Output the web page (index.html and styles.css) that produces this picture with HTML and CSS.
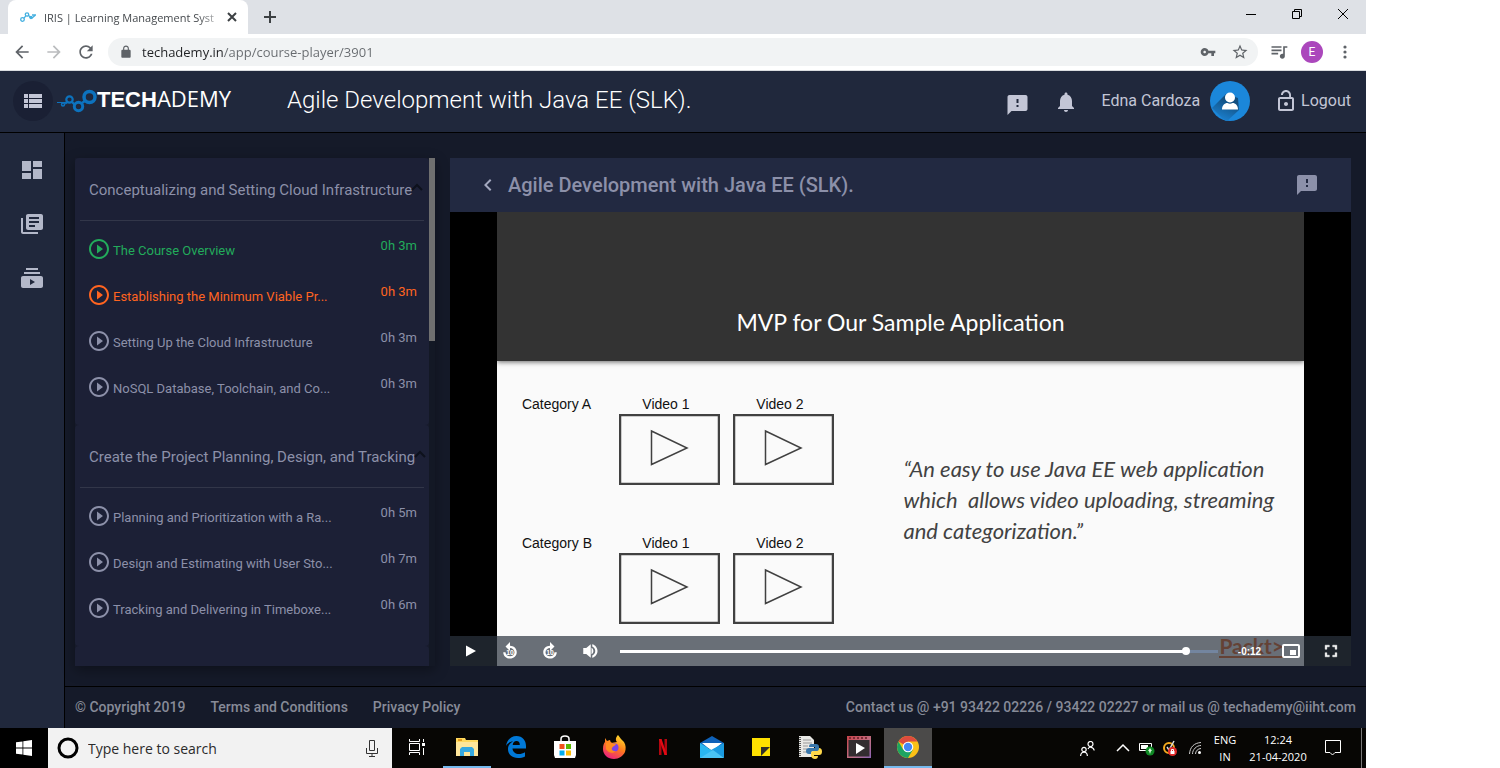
FILE: index.html
```html
<!DOCTYPE html>
<html lang="en">
<head>
<meta charset="utf-8">
<title>IRIS | Learning Management System</title>
<link rel="stylesheet" href="styles.css">
</head>
<body>
<div class="desktop">

  <div class="tabstrip">
    <div class="tab">
      <svg class="tab-icon" viewBox="0 0 16 16" fill="none" stroke="#45b0e0" stroke-width="1.300"><circle cx="2.500" cy="10.500" r="1.800"/><circle cx="7" cy="5.500" r="1.700"/><path d="M3.800 9.300L6 6.600M8.500 6l1.500 2.500 2 .5 3-2.500M12 6h4"/><circle cx="11" cy="8.500" r="1"/></svg>
      <span class="tab-title">IRIS | Learning Management Syst</span>
      <button class="bare" aria-label="Close tab"><svg width="10" height="10" viewBox="0 0 10 10" stroke="#3c4043" stroke-width="2"><path d="M1 1l8 8M9 1l-8 8"/></svg></button>
    </div>
    <button class="bare new-tab" aria-label="New tab"><svg width="12" height="12" viewBox="0 0 12 12" stroke="#3c4043" stroke-width="2"><path d="M6 0v12M0 6h12"/></svg></button>
    <div class="window-buttons">
      <button class="bare" aria-label="Minimize"><svg width="10" height="10" viewBox="0 0 10 10" stroke="#000"><path d="M0 5.500h10"/></svg></button>
      <button class="bare" aria-label="Restore"><svg width="10" height="10" viewBox="0 0 10 10" fill="none" stroke="#000"><path d="M.5 2.500h7v7h-7zM2.500 2.500v-2h7v7h-2"/></svg></button>
      <button class="bare" aria-label="Close"><svg width="10" height="10" viewBox="0 0 10 10" stroke="#000"><path d="M0 0l10 10M10 0L0 10"/></svg></button>
    </div>
  </div>

  <div class="toolbar">
    <button class="bare nav-button" aria-label="Back"><svg width="20" height="20" viewBox="0 0 24 24" fill="#5f6368"><path d="M20 11H7.830l5.590-5.590L12 4l-8 8 8 8 1.410-1.410L7.830 13H20v-2z"/></svg></button>
    <button class="bare nav-button" aria-label="Forward"><svg width="20" height="20" viewBox="0 0 24 24" fill="#babcbe"><path d="M4 11h12.170l-5.590-5.590L12 4l8 8-8 8-1.410-1.410L16.170 13H4v-2z"/></svg></button>
    <button class="bare nav-button" aria-label="Reload"><svg width="20" height="20" viewBox="0 0 24 24" fill="#5f6368"><path d="M17.650 6.350C16.200 4.900 14.210 4 12 4c-4.420 0-7.990 3.580-7.990 8s3.570 8 7.990 8c3.730 0 6.840-2.550 7.730-6h-2.080c-.82 2.330-3.040 4-5.650 4-3.310 0-6-2.690-6-6s2.690-6 6-6c1.660 0 3.140.69 4.220 1.780L13 11h7V4l-2.350 2.350z"/></svg></button>
    <div class="omnibox">
      <svg width="14" height="14" viewBox="0 0 24 24" fill="#5f6368"><path d="M18 8h-1V6c0-2.760-2.240-5-5-5S7 3.240 7 6v2H6c-1.100 0-2 .9-2 2v10c0 1.100.9 2 2 2h12c1.100 0 2-.9 2-2V10c0-1.100-.9-2-2-2zM9 8V6c0-1.660 1.340-3 3-3s3 1.340 3 3v2H9z"/></svg>
      <input class="address" type="text" aria-label="Address" value="techademy.in/app/course-player/3901">
      <button class="bare omni-button" aria-label="Saved passwords"><svg width="16" height="16" viewBox="0 0 24 24" fill="#5f6368"><path d="M12.650 10C11.830 7.670 9.610 6 7 6c-3.310 0-6 2.690-6 6s2.690 6 6 6c2.610 0 4.830-1.670 5.650-4H17v4h4v-4h2v-4H12.650zM7 14c-1.100 0-2-.9-2-2s.9-2 2-2 2 .9 2 2-.9 2-2 2z"/></svg></button>
      <button class="bare omni-button" aria-label="Bookmark"><svg width="18" height="18" viewBox="0 0 24 24" fill="#5f6368"><path d="M22 9.240l-7.190-.62L12 2 9.190 8.630 2 9.240l5.460 4.730L5.820 21 12 17.270 18.180 21l-1.630-7.030L22 9.240zM12 15.400l-3.760 2.270 1-4.280-3.320-2.880 4.380-.38L12 6.100l1.710 4.040 4.380.38-3.320 2.880 1 4.280L12 15.400z"/></svg></button>
    </div>
    <button class="bare tool-button" aria-label="Media controls"><svg width="20" height="20" viewBox="0 0 24 24" fill="#5f6368"><path d="M15 5H3v2h12V5zm0 4H3v2h12V9zM3 15h8v-2H3v2zM17 5v9.180c-.31-.11-.65-.18-1-.18-1.660 0-3 1.340-3 3s1.340 3 3 3 3-1.340 3-3V7h3V5h-5z"/></svg></button>
    <button class="bare profile" aria-label="Profile">E</button>
    <button class="bare tool-button" aria-label="Menu"><svg width="4" height="14" viewBox="0 0 4 14" fill="#5f6368"><circle cx="2" cy="2" r="1.600"/><circle cx="2" cy="7" r="1.600"/><circle cx="2" cy="12" r="1.600"/></svg></button>
  </div>

  <div class="app">
    <header class="app-header">
      <button class="bare menu-toggle" aria-label="Toggle menu"><svg width="24" height="24" viewBox="0 0 24 24" fill="#c3c6d6"><path d="M3 14h4v-4H3v4zm0 5h4v-4H3v4zM3 9h4V5H3v4zm5 5h13v-4H8v4zm0 5h13v-4H8v4zM8 5v4h13V5H8z"/></svg></button>
      <a class="logo" href="#">
        <svg width="38" height="24" viewBox="0 0 38 24" fill="none" stroke="#0d72bd"><path d="M-2 13.500h8" stroke-width="1"/><circle cx="4" cy="15.500" r="1.500" stroke-width="1.500"/><path d="M6 14.500l3-2M13 13l3 3M23 14l4-3" stroke-width="2.200"/><circle cx="10.500" cy="10.500" r="3.200" stroke-width="2.200"/><circle cx="19.500" cy="17.500" r="4.200" stroke-width="3"/><circle cx="30.500" cy="8" r="5.500" stroke-width="3.500"/></svg>
        <span><b>TECH</b>ADEMY</span>
      </a>
      <h1 class="course-name">Agile Development with Java EE (SLK).</h1>
      <div class="header-actions">
        <button class="bare feedback-button" aria-label="Feedback"><svg width="25" height="24" viewBox="0 0 24 24" fill="#c3c6d6"><path d="M20 2H4c-1.100 0-1.990.9-1.990 2L2 22l4-4h14c1.100 0 2-.9 2-2V4c0-1.100-.9-2-2-2zm-7 12h-2v-2h2v2zm0-4h-2V6h2v4z"/></svg></button>
        <button class="bare bell-button" aria-label="Notifications"><svg width="24" height="24" viewBox="0 0 24 24" fill="#c3c6d6"><path d="M12 22c1.100 0 2-.9 2-2h-4c0 1.100.89 2 2 2zm6-6v-5c0-3.070-1.640-5.640-4.500-6.320V4c0-.83-.67-1.500-1.500-1.500s-1.500.67-1.500 1.500v.68C7.630 5.360 6 7.920 6 11v5l-2 2v1h16v-1l-2-2z"/></svg></button>
        <span class="user-name">Edna Cardoza</span>
        <svg class="avatar" width="40" height="40" viewBox="0 0 40 40"><defs><clipPath id="disc"><circle cx="20" cy="20" r="20"/></clipPath><linearGradient id="shade" x1=".6" y1=".2" x2=".3" y2=".9"><stop offset="0" stop-color="#124f80"/><stop offset="1" stop-color="#1b80cf"/></linearGradient></defs><circle cx="20" cy="20" r="20" fill="#1b87da"/><g clip-path="url(#disc)"><path d="M16 13L2 27l14 14 13-12-1-12z" fill="url(#shade)"/></g><circle cx="20" cy="16.500" r="5" fill="#fff"/><path d="M12 28.500c0-4 2.500-6.500 5.500-6.500 1.500 1 3.500 1 5 0 3 0 5.500 2.500 5.500 6.500z" fill="#fff"/></svg>
        <a class="logout" href="#"><svg width="24" height="24" viewBox="0 0 24 24" fill="#c3c6d6"><path d="M12 17c1.100 0 2-.9 2-2s-.9-2-2-2-2 .9-2 2 .9 2 2 2zm6-9h-1V6c0-2.760-2.240-5-5-5S7 3.240 7 6h1.900c0-1.710 1.390-3.100 3.100-3.100 1.710 0 3.100 1.390 3.100 3.100v2H6c-1.100 0-2 .9-2 2v10c0 1.100.9 2 2 2h12c1.100 0 2-.9 2-2V10c0-1.100-.9-2-2-2zm0 12H6V10h12v10z"/></svg>Logout</a>
      </div>
    </header>

    <div class="app-body">
      <nav class="side-nav" aria-label="Main">
        <a href="#" aria-label="Dashboard"><svg width="24" height="24" viewBox="0 0 24 24"><path d="M2 13h9V3H2v10zm0 8h9v-6H2v6zm11 0h9V11h-9v10zm0-18v6h9V3h-9z"/></svg></a>
        <a href="#" aria-label="Courses"><svg width="24" height="24" viewBox="0 0 24 24"><path d="M3 6H1v14c0 1.100.9 2 2 2h15v-2H3V6zm18-4H8c-1.100 0-2 .9-2 2v12c0 1.100.9 2 2 2h13c1.100 0 2-.9 2-2V4c0-1.100-.9-2-2-2zm-2 9H9V9h10v2zm-4 4H9v-2h6v2zm4-8H9V5h10v2z"/></svg></a>
        <a href="#" aria-label="Videos"><svg width="24" height="24" viewBox="0 0 24 24"><path d="M20 8H4V6h16v2zm-2-6H6v2h12V2zm5 10v8c0 1.100-.9 2-2 2H3c-1.100 0-2-.9-2-2v-8c0-1.100.9-2 2-2h18c1.100 0 2 .9 2 2zm-8 4l-5-3v6l5-3z"/></svg></a>
      </nav>

      <div class="main">
        <div class="content">
          <aside class="course-list">
            <div class="modules">
              <section class="module">
                <h2 class="module-title">Conceptualizing and Setting Cloud Infrastructure<svg class="caret" width="12" height="8" viewBox="0 0 12 8" fill="none" stroke="#0d111c" stroke-width="2"><path d="M1 7l5-5 5 5"/></svg></h2>
                <ul class="lessons">
                  <li class="done"><svg class="play" viewBox="0 0 24 24"><use href="#play-circle"/></svg><a href="#">The Course Overview</a><span>0h 3m</span></li>
                  <li class="current"><svg class="play" viewBox="0 0 24 24"><use href="#play-circle"/></svg><a href="#">Establishing the Minimum Viable Pr...</a><span>0h 3m</span></li>
                  <li><svg class="play" viewBox="0 0 24 24"><use href="#play-circle"/></svg><a href="#">Setting Up the Cloud Infrastructure</a><span>0h 3m</span></li>
                  <li><svg class="play" viewBox="0 0 24 24"><use href="#play-circle"/></svg><a href="#">NoSQL Database, Toolchain, and Co...</a><span>0h 3m</span></li>
                </ul>
              </section>
              <section class="module">
                <h2 class="module-title">Create the Project Planning, Design, and Tracking<svg class="caret" width="12" height="8" viewBox="0 0 12 8" fill="none" stroke="#0d111c" stroke-width="2"><path d="M1 7l5-5 5 5"/></svg></h2>
                <ul class="lessons">
                  <li><svg class="play" viewBox="0 0 24 24"><use href="#play-circle"/></svg><a href="#">Planning and Prioritization with a Ra...</a><span>0h 5m</span></li>
                  <li><svg class="play" viewBox="0 0 24 24"><use href="#play-circle"/></svg><a href="#">Design and Estimating with User Sto...</a><span>0h 7m</span></li>
                  <li><svg class="play" viewBox="0 0 24 24"><use href="#play-circle"/></svg><a href="#">Tracking and Delivering in Timeboxe...</a><span>0h 6m</span></li>
                </ul>
              </section>
              <section class="module module-rest"></section>
            </div>
            <div class="scrollbar"><div class="scroll-thumb"></div></div>
          </aside>

          <section class="player">
            <div class="player-header">
              <button class="bare" aria-label="Back to course"><svg width="24" height="24" viewBox="0 0 24 24" fill="#a3a8bf"><path d="M15.410 7.410L14 6l-6 6 6 6 1.410-1.410L10.830 12z"/></svg></button>
              <h2>Agile Development with Java EE (SLK).</h2>
              <button class="bare" aria-label="Report"><svg width="24" height="24" viewBox="0 0 24 24" fill="#8c90a9"><path d="M20 2H4c-1.100 0-1.990.9-1.990 2L2 22l4-4h14c1.100 0 2-.9 2-2V4c0-1.100-.9-2-2-2zm-7 12h-2v-2h2v2zm0-4h-2V6h2v4z"/></svg></button>
            </div>
            <div class="video">
              <div class="slide">
                <div class="slide-title">MVP for Our Sample Application</div>
                <div class="slide-body">
                  <div class="wireframe">
                    <span>Category A</span>
                    <div class="thumb">Video 1<svg viewBox="0 0 101 71"><use href="#video-box"/></svg></div>
                    <div class="thumb">Video 2<svg viewBox="0 0 101 71"><use href="#video-box"/></svg></div>
                    <span>Category B</span>
                    <div class="thumb">Video 1<svg viewBox="0 0 101 71"><use href="#video-box"/></svg></div>
                    <div class="thumb">Video 2<svg viewBox="0 0 101 71"><use href="#video-box"/></svg></div>
                  </div>
                  <p class="quote">“An easy to use Java EE web application<br>which&nbsp; allows video uploading, streaming<br>and categorization.”</p>
                </div>
                <div class="publisher">Packt&gt;</div>
              </div>
              <div class="controls">
                <button class="bare" aria-label="Play"><svg width="20" height="20" viewBox="0 0 20 20" fill="#fff"><path d="M6 4.500v11l10-5.500z"/></svg></button>
                <button class="bare" aria-label="Back 10 seconds"><svg width="18" height="18" viewBox="0 0 24 24" fill="#fff"><path d="M12 5V0L6 6l6 6V8c3 0 6 2.300 6 5.500S15.300 19 12 19s-6-2.500-6-5.500H3C3 18.500 7 22 12 22s9-3.800 9-8.500S17 5 12 5z"/><text x="12" y="17" class="ten">10</text></svg></button>
                <button class="bare" aria-label="Forward 10 seconds"><svg width="18" height="18" viewBox="0 0 24 24" fill="#fff"><path d="M12 5V0l6 6-6 6V8c-3 0-6 2.300-6 5.500S8.700 19 12 19s6-2.500 6-5.500h3C21 18.500 17 22 12 22s-9-3.800-9-8.500S7 5 12 5z"/><text x="12" y="17" class="ten">10</text></svg></button>
                <button class="bare" aria-label="Mute"><svg width="18" height="18" viewBox="0 0 24 24" fill="#fff"><path d="M3 8v8h4l6 5V3L7 8H3zm13.500 4c0-1.800-1-3.500-2.500-4.300v8.600c1.500-.8 2.500-2.500 2.500-4.300zM15 3v3c2.300 1 4 3.300 4 6s-1.700 5-4 6v3c4-1 7-4.700 7-9s-3-8-7-9z"/></svg></button>
                <input class="seek" type="range" min="0" max="1000" value="953" aria-label="Seek">
                <span class="time">-0:12</span>
                <button class="bare" aria-label="Picture in picture"><svg width="18" height="14" viewBox="0 0 18 14" fill="none" stroke="#fff" stroke-width="2"><rect x="1" y="1" width="16" height="12" rx="1"/><path d="M8 6h6v5H8z" fill="#fff" stroke="none"/></svg></button>
                <button class="bare" aria-label="Fullscreen"><svg width="20" height="20" viewBox="0 0 24 24" fill="#fff"><path d="M7 14H5v5h5v-2H7v-3zm-2-4h2V7h3V5H5v5zm12 7h-3v2h5v-5h-2v3zM14 5v2h3v3h2V5h-5z" stroke="#fff" stroke-width=".5"/></svg></button>
              </div>
            </div>
          </section>
        </div>

        <footer class="footer">
          <span>© Copyright 2019</span>
          <a href="#">Terms and Conditions</a>
          <a href="#">Privacy Policy</a>
          <span class="contact">Contact us @ +91 93422 02226 / 93422 02227 or mail us @ techademy@iiht.com</span>
        </footer>
      </div>
    </div>
  </div>

  <div class="taskbar">
    <button class="bare start" aria-label="Start"><svg width="16" height="16" viewBox="0 0 16 16" fill="#fff"><path d="M0 2.300l6.500-.9v6.100H0zM7.300 1.300L16 0v7.500H7.300zM0 8.400h6.500v6.200L0 13.700zM7.300 8.400H16V16l-8.700-1.300z"/></svg></button>
    <label class="search">
      <svg width="22" height="22" viewBox="0 0 22 22" fill="none" stroke="#000" stroke-width="3"><circle cx="11" cy="11" r="9"/></svg>
      <input type="text" placeholder="Type here to search" aria-label="Search">
      <svg width="12" height="17" viewBox="0 0 12 17" fill="none" stroke="#333"><path d="M3.500.5h5v10h-5zM.5 8v5.500h11V8M6 13.500v3M3 16.500h6"/></svg>
    </label>
    <div class="apps">
      <button class="bare task-view" aria-label="Task view"><svg width="16" height="16" viewBox="0 0 16 16" fill="none" stroke="#fff"><path d="M.5 0v2.500h10V0M.5 16v-2.500h10V16M.5 4.500h10v7H.5zM14.500 0v3M14.500 9v7"/><path d="M13 4h3v3h-3z" fill="#fff" stroke="none"/></svg></button>
      <button class="bare running" aria-label="File Explorer"><svg width="22" height="18" viewBox="0 0 22 18"><path d="M0 0h9l1 2h12v16H0z" fill="#ffd95e"/><path d="M0 4h22v14H0z" fill="#ffe69b"/><path d="M2 1h4v2H2z" fill="#e69a1c"/><path d="M4 18v-7l2-2h10l2 2v7h-4v-4H8v4z" fill="#36a9e1"/></svg></button>
      <button class="bare" aria-label="Edge"><svg width="20" height="22" viewBox="0 0 20 22"><path d="M0 10C1 4 5 0 10.500 0 16.500 0 20 4.500 20 10v2.500H6.500c.2 3.500 3 5.500 6.500 5.500 2 0 4-.6 6-1.800V20.500c-2 1-4.500 1.500-7 1.500C6 22 2 18.500 2 13c0-3.500 2-6 5-7.500C4.500 5.500 1.500 7 0 10zM6.700 9h7.100c0-2.500-1-4-3.300-4-2 0-3.500 1.500-3.800 4z" fill="#0078d7"/></svg></button>
      <button class="bare" aria-label="Store"><svg width="24" height="24" viewBox="0 0 24 24"><path d="M8 7V4c0-2 1-3 4-3s4 1 4 3v3" fill="none" stroke="#fff" stroke-width="1.500"/><path d="M1 6h22v14l-1 3H2l-1-3z" fill="#fff"/><path d="M6.500 9h5v5h-5z" fill="#f1511b"/><path d="M13 9h5v5h-5z" fill="#5cb800"/><path d="M6.500 15.500h5v5h-5z" fill="#00adef"/><path d="M13 15.500h5v5h-5z" fill="#fbbc09"/></svg></button>
      <button class="bare" aria-label="Firefox"><svg width="24" height="24" viewBox="0 0 24 24"><defs><linearGradient id="fox" x1=".8" y1="0" x2=".3" y2="1"><stop offset="0" stop-color="#ffe22d"/><stop offset=".5" stop-color="#ff7a1c"/><stop offset="1" stop-color="#ec1f80"/></linearGradient></defs><path d="M3 3l2 3 3-1 1 3 6-1c-2-2-1-5 1-7l3 4 3 3c2 3 2 7 1 10-2 4-6 7-11 7C6 24 1 20 1 14c0-4 1-6 2-7z" fill="url(#fox)"/><circle cx="12.500" cy="12.500" r="4" fill="#7a42e8"/><path d="M4 8c3-2 6-1 7 1h3c-1 2-3 2-4 4-1 1 1 4 4 3-3 3-8 2-10-2z" fill="#ff8a1f"/></svg></button>
      <button class="bare" aria-label="Netflix"><svg width="8" height="16" viewBox="0 0 8 16"><path d="M0 0h2.500v16H0zM5.500 0H8v16H5.500z" fill="#b1060f"/><path d="M0 0h2.500L8 16H5.500z" fill="#e50914"/></svg></button>
      <button class="bare" aria-label="Mail"><svg width="24" height="22" viewBox="0 0 24 22"><path d="M0 7l12-7 12 7v5H0z" fill="#0f61b8"/><path d="M2 7h20L12 15z" fill="#fff"/><path d="M0 7l24 15H0z" fill="#29b6f0"/><path d="M24 7v15L11 14z" fill="#1a9ae0"/><path d="M0 22L13 14l11 8z" fill="#4ac4f5"/></svg></button>
      <button class="bare" aria-label="Sticky Notes"><svg width="18" height="18" viewBox="0 0 18 18"><path d="M0 0h18v18H0z" fill="#ffe100"/><path d="M9 9h9l-9 9z" fill="#30302a"/></svg></button>
      <button class="bare" aria-label="Python"><svg width="24" height="24" viewBox="0 0 24 24"><path d="M1 1h11l4 4v17H1z" fill="#e9e9e6"/><path d="M2 2v19" stroke="#555" stroke-width="2" stroke-dasharray="1 1"/><path d="M5 5h8M5 8h9M5 11h5M5 14h4M5 17h4" stroke="#999"/><path d="M13 9h5q3 0 3 3v4h-6q-2 0-2 3h-2q-3 0-3-3t3-3h6v-1h-6q0-3 2-3z" fill="#3776ab"/><path d="M21 13q3 0 3 3.500T21 20h-5v1h4q0 3-3 3t-4-3v-3q0-2 3-2h3q2 0 2-3z" fill="#ffd94b"/></svg></button>
      <button class="bare" aria-label="Video editor"><svg width="24" height="22" viewBox="0 0 24 22"><defs><linearGradient id="film" x1="0" y1="0" x2="1" y2="1"><stop offset="0" stop-color="#c9444a"/><stop offset=".6" stop-color="#bf7186"/><stop offset="1" stop-color="#8a62b5"/></linearGradient></defs><path d="M0 0h24v22H0z" fill="url(#film)"/><path d="M1.500 4h21v16.500h-21z" fill="#332d30"/><path d="M2 2h20" stroke="#7c2b35" stroke-width="2" stroke-dasharray="2 2"/><path d="M9 7l9 5-9 6z" fill="#fff"/></svg></button>
      <button class="bare running active" aria-label="Chrome"><svg width="22" height="22" viewBox="0 0 22 22"><circle cx="11" cy="11" r="11" fill="#fbc116"/><path d="M11 11L1.500 5.500A11 11 0 0 1 20.500 5.500H11z" fill="#dd4b3e"/><path d="M1.500 5.500A11 11 0 0 0 11 22l4.800-8.300L11 11 6.200 13.700z" fill="#1da462"/><circle cx="11" cy="11" r="5.300" fill="#fff"/><circle cx="11" cy="11" r="4.200" fill="#4587f3"/></svg></button>
    </div>
    <div class="tray">
      <svg class="people" width="15" height="15" viewBox="0 0 15 15" fill="none" stroke="#fff" stroke-width="1.200"><circle cx="10.500" cy="3" r="2.500"/><path d="M8 8c1-2.500 5.500-2.500 6.200 1.500"/><circle cx="4" cy="8.500" r="2.200"/><path d="M.6 15c.2-5 6.600-5 6.800 0"/></svg>
      <svg width="24" height="12" viewBox="0 0 24 12" fill="none" stroke="#fff" stroke-width="1.500"><path d="M6 9l6-6 6 6"/></svg>
      <svg width="24" height="16" viewBox="0 0 24 16"><path d="M4.500 3.500h12v7h-12z" fill="none" stroke="#fff"/><path d="M6 5h7v4H6z" fill="#fff"/><circle cx="15" cy="11" r="4.500" fill="#108a25"/><path d="M15 8l2 3h-1l-1 3-1-3h-1z" fill="#d6f5d9"/></svg>
      <svg width="24" height="18" viewBox="0 0 24 18"><circle cx="10" cy="9" r="5" fill="none" stroke="#f5ab1e" stroke-width="2"/><path d="M8 8l2 3 5-9" fill="none" stroke="#ddd" stroke-width="1.500"/><circle cx="13.500" cy="12.500" r="4.500" fill="#e02a2a"/><path d="M11.500 12h4v3h-4z" fill="#fff"/><path d="M12.500 12v-1.500h2V12" fill="none" stroke="#fff"/></svg>
      <svg width="24" height="14" viewBox="0 0 24 14" fill="none" stroke="#ccc"><path d="M6.500 13C7 6 11 2 18 1.500M9.500 13c0-4.500 4-8.500 8.500-8.500M12.500 13c0-3 2.500-5.500 5.500-5.500"/><circle cx="16.500" cy="11.500" r="1.500" fill="#fff" stroke="none"/></svg>
      <div class="lang">ENG<br>IN</div>
      <div class="clock">12:24<br>21-04-2020</div>
      <button class="bare action-center" aria-label="Notifications"><svg width="16" height="16" viewBox="0 0 16 16" fill="none" stroke="#fff"><path d="M.5.5h15v12H10l-2.500 2.500L5 12.500H.5z"/></svg></button>
      <div class="show-desktop"></div>
    </div>
  </div>
</div>

<svg class="symbols" width="0" height="0" aria-hidden="true">
  <symbol id="play-circle" viewBox="0 0 24 24"><path d="M10 16.500l6-4.500-6-4.500v9zM12 2C6.480 2 2 6.480 2 12s4.480 10 10 10 10-4.480 10-10S17.520 2 12 2zm0 18c-4.410 0-8-3.590-8-8s3.590-8 8-8 8 3.590 8 8-3.590 8-8 8z"/></symbol>
  <symbol id="video-box" viewBox="0 0 101 71"><rect x="1" y="1" width="99" height="69" fill="none" stroke="#414141" stroke-width="2.500"/><path d="M32.500 17v33.500L68 34z" fill="none" stroke="#414141" stroke-width="1.500"/></symbol>
</svg>
</body>
</html>
```

FILE: styles.css
```css
* { box-sizing: border-box; }

body {
  margin: 0;
  padding-right: 134px;
  background: #fff;
  font-family: Roboto, "Liberation Sans", sans-serif;
}

h1, h2, p, ul { margin: 0; padding: 0; }
ul { list-style: none; }
a { color: inherit; text-decoration: none; }
svg { display: block; flex: none; }
input { font: inherit; border: 0; outline: 0; padding: 0; }
.symbols { position: absolute; }

.bare {
  display: flex;
  align-items: center;
  justify-content: center;
  flex: none;
  margin: 0;
  padding: 0;
  border: 0;
  background: none;
}

.desktop {
  display: flex;
  flex-direction: column;
  height: 100vh;
  overflow: hidden;
}

/* Browser window */
.tabstrip {
  display: flex;
  height: 34px;
  flex: none;
  padding-left: 8px;
  background: #dee1e6;
}
.tab {
  display: flex;
  align-items: center;
  width: 240px;
  padding: 0 11px 0 12px;
  gap: 8px;
  border-radius: 8px 8px 0 0;
  background: #fff;
  font: 11px "Open Sans", sans-serif;
  color: #45494d;
}
.tab-icon { width: 16px; height: 16px; }
.tab-title {
  flex: 1;
  white-space: nowrap;
  mask-image: linear-gradient(90deg, #000 88%, transparent 104%);
}
.new-tab { width: 44px; }
.window-buttons { display: flex; margin-left: auto; }
.window-buttons .bare { width: 46px; height: 28px; }

.toolbar {
  display: flex;
  align-items: center;
  height: 37px;
  flex: none;
  padding: 0 10px 1px 6px;
  background: #fff;
  border-bottom: 1px solid #d9dcdf;
}
.nav-button { width: 32px; }
.omnibox {
  display: flex;
  align-items: center;
  flex: 1;
  height: 28px;
  margin: 0 5px 0 6px;
  padding: 0 2px 0 11px;
  border-radius: 14px;
  background: #f1f3f4;
}
.address {
  flex: 1;
  min-width: 0;
  margin-left: 9px;
  font: 13px "Open Sans", sans-serif;
  background: linear-gradient(90deg, #202124 82px, #666a6e 82px);
  background-clip: text;
  -webkit-background-clip: text;
  color: transparent;
}
.omni-button { width: 32px; }
.tool-button { width: 32px; }
.profile {
  width: 22px;
  height: 22px;
  margin: 0 6px;
  border-radius: 50%;
  background: #ab47bc;
  color: #fff;
  font: 12px Roboto, sans-serif;
}
.profile + .tool-button { width: 16px; margin: 0 3px 0 8px; }

/* Application shell */
.app {
  display: flex;
  flex-direction: column;
  flex: 1;
  min-height: 0;
  background: #151a29;
}
.app-header {
  display: flex;
  align-items: center;
  height: 62px;
  flex: none;
  padding: 0 15px 2px 13px;
  background: #20283c;
  border-bottom: 1px solid #000;
  color: #c3c6d6;
}
.menu-toggle {
  width: 40px;
  height: 40px;
  border-radius: 50%;
  background: #1a2034;
}
.logo {
  display: flex;
  align-items: center;
  width: 227px;
  padding-left: 6px;
  color: #fff;
  font: 22px/24px "Open Sans", sans-serif;
}
.logo svg { overflow: visible; }
.logo b { font: bold 22px "Liberation Sans", sans-serif; }
.logo span { margin-bottom: 2px; }
.course-name {
  padding: 0 0 2px 7px;
  color: #fff;
  font-size: 24px;
  font-weight: 300;
}
.header-actions {
  display: flex;
  align-items: center;
  margin-left: auto;
  font-size: 16px;
}
.feedback-button { padding-top: 9px; }
.bell-button { margin: 2px 24px 0 24px; }
.user-name { margin-right: 10px; }
.logout { display: flex; align-items: center; gap: 3px; margin-left: 24px; }

.app-body { display: flex; flex: 1; min-height: 0; }
.side-nav {
  display: flex;
  flex-direction: column;
  align-items: center;
  gap: 30px;
  width: 65px;
  flex: none;
  padding-top: 25px;
  background: #20283c;
  border-right: 1px solid #000;
  fill: #b3b8c9;
}
.main { display: flex; flex-direction: column; flex: 1; min-width: 0; }
.content {
  display: flex;
  gap: 15px;
  flex: 1;
  min-height: 0;
  padding: 25px 15px 20px 10px;
}

/* Course contents */
.course-list {
  display: flex;
  width: 360px;
  flex: none;
  color: #8c90a9;
  box-shadow: 0 4px 12px rgba(0, 0, 0, .35);
}
.modules { flex: 1; overflow: hidden; background: #171b2b; }
.module {
  padding: 0 5px 15px;
  border-radius: 4px;
  background: #1c2036;
}
.module-rest { height: 40px; }
.module-title {
  display: flex;
  align-items: center;
  height: 63px;
  margin-bottom: 5px;
  padding: 2px 0 0 9px;
  border-bottom: 1px solid #323649;
  font-size: 15px;
  font-weight: 400;
  white-space: nowrap;
}
.module-title .caret { margin: -6px 0 0 -1px; }
.lessons li {
  display: flex;
  align-items: center;
  height: 46px;
  padding: 0 7px;
  font-size: 13px;
  fill: currentColor;
}
.play { width: 24px; height: 24px; margin-right: 2px; }
.lessons a { flex: 1; padding-top: 3px; white-space: nowrap; }
.lessons span { padding-bottom: 7px; }
.done { color: #22ab5b; }
.current { color: #ff6420; }
.scrollbar { width: 6px; background: #131825; }
.scroll-thumb { height: 36%; background: #6f6f6f; }

/* Player */
.player { display: flex; flex-direction: column; flex: 1; min-width: 0; }
.player-header {
  display: flex;
  align-items: center;
  gap: 8px;
  height: 54px;
  flex: none;
  padding: 0 32px 0 26px;
  background: #222941;
  color: #8c90a9;
}
.player-header h2 { flex: 1; font-size: 20px; font-weight: 500; }
.video {
  position: relative;
  display: flex;
  justify-content: center;
  flex: 1;
  min-height: 0;
  background: #000;
}
.slide {
  position: relative;
  display: flex;
  flex-direction: column;
  height: 100%;
  aspect-ratio: 16 / 9;
  overflow: hidden;
  background: #fafafa;
}
.slide-title {
  padding: 95px 0 24px;
  background: #333;
  box-shadow: 0 1px 5px rgba(0, 0, 0, .6);
  color: #fff;
  font: 23px/30px Lato, sans-serif;
  text-align: center;
}
.slide-body {
  display: flex;
  justify-content: space-between;
  padding: 36px 30px 0 25px;
}
.wireframe {
  display: grid;
  grid-template-columns: 84px 101px 101px;
  gap: 51px 13px;
  color: #111;
  font: 14px/15px "Liberation Sans", Arial, sans-serif;
}
.thumb { padding-right: 7px; text-align: center; }
.thumb svg { width: 101px; height: 71px; margin-top: 2px; }
.quote {
  padding-top: 56px;
  color: #424242;
  font: italic 22px/31px Lato, sans-serif;
  white-space: nowrap;
}
.publisher {
  position: absolute;
  right: 20px;
  bottom: 8px;
  border-bottom: 2px solid #ec661f;
  color: #ec661f;
  font: bold 21px/20px Lato, sans-serif;
}
.controls {
  position: absolute;
  inset: auto 0 0 0;
  display: flex;
  align-items: center;
  height: 30px;
  background: rgba(43, 51, 63, .7);
  color: #fff;
}
.controls .bare { width: 40px; height: 30px; }
.ten { font: bold 9px "Liberation Sans", sans-serif; text-anchor: middle; }
.seek {
  appearance: none;
  flex: 1;
  min-width: 0;
  height: 3px;
  margin: 0 10px;
  background: linear-gradient(90deg, #fff 94.8%, #73859f 94.8%);
}
.seek::-webkit-slider-thumb {
  appearance: none;
  width: 8px;
  height: 8px;
  border-radius: 50%;
  background: #fff;
}
.time {
  width: 43px;
  text-align: center;
  font: bold 10px "Liberation Sans", Arial, sans-serif;
}

.footer {
  display: flex;
  align-items: center;
  height: 42px;
  flex: none;
  padding: 0 10px 2px;
  border-top: 1px solid #000;
  color: #878b98;
  font-size: 14px;
  font-weight: 500;
}
.footer a { margin-left: 25px; }
.contact { margin-left: auto; }

/* Desktop taskbar */
.taskbar {
  display: flex;
  height: 40px;
  flex: none;
  background: #070604;
  color: #fff;
}
.start { width: 48px; background: #000; }
.search {
  display: flex;
  align-items: center;
  gap: 9px;
  width: 344px;
  padding: 0 14px 0 9px;
  background: #f2f2f2;
  font: 14px "Open Sans", sans-serif;
}
.search input { flex: 1; min-width: 0; background: none; color: #222; }
.search input::placeholder { color: #2b2b2b; opacity: 1; }
.apps { display: flex; gap: 1px; }
.apps .bare { width: 48px; border-bottom: 2px solid transparent; }
.apps .task-view { width: 50px; }
.apps .running { border-bottom-color: #76b9ed; }
.apps .active { background: #4b4a49; }
.tray {
  display: flex;
  align-items: center;
  margin-left: auto;
  font: 11px/17px "Open Sans", sans-serif;
  text-align: center;
}
.people { margin-right: 16px; }
.lang { width: 36px; }
.clock { width: 62px; margin-left: 4px; white-space: nowrap; }
.action-center { width: 48px; }
.show-desktop { align-self: stretch; width: 5px; margin-left: 4px; border-left: 1px solid #777; }
```
